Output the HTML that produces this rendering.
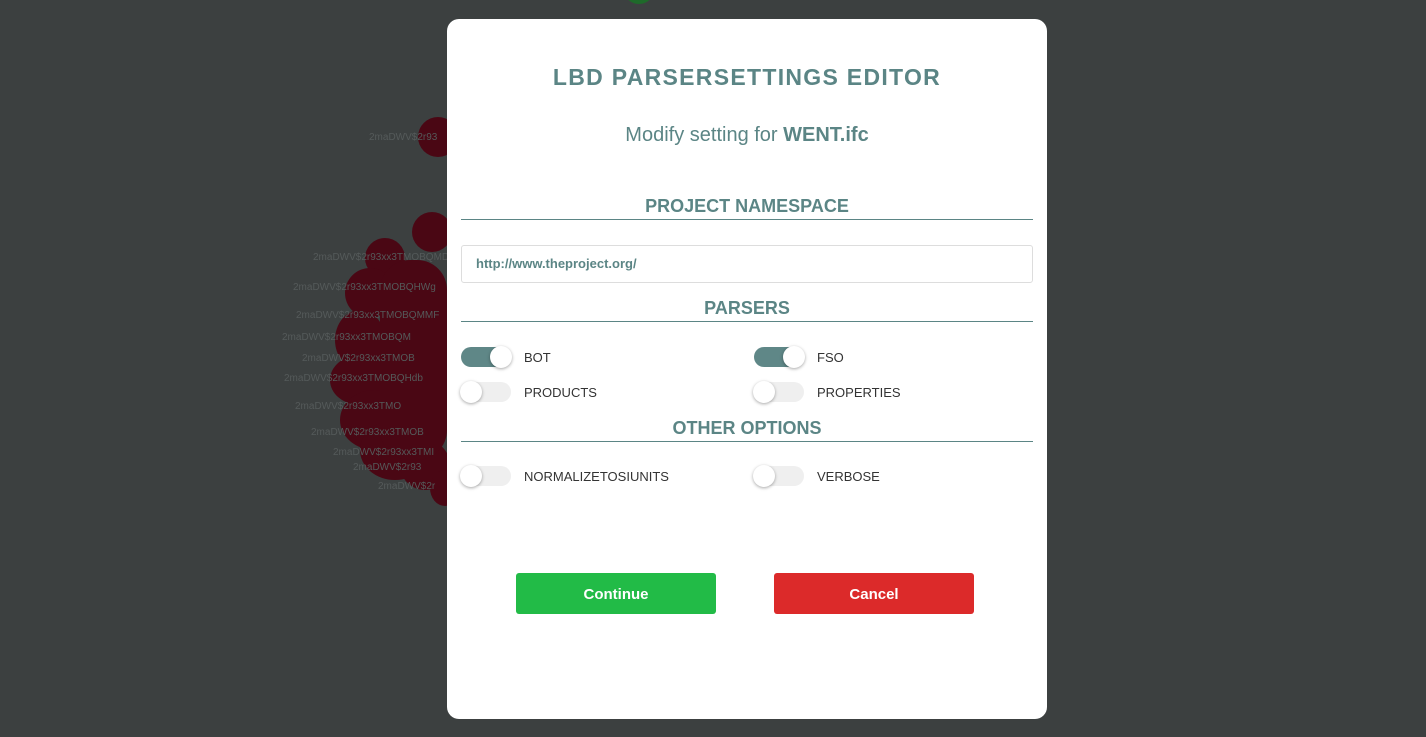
<!DOCTYPE html>
<html><head><style>
body{margin:0;width:1426px;height:737px;background:#3c4040;position:relative;overflow:hidden;font-family:"Liberation Sans",sans-serif}
.c{position:absolute;background:#4a0714;border-radius:50%}
.l{position:absolute;color:#555a5a;font-size:10px;white-space:nowrap}
.m{position:absolute;left:447px;top:19px;width:600px;height:700px;background:#fff;border-radius:12px}
.t{position:absolute;left:0;width:600px;text-align:center;color:#5b8585}
.h{position:absolute;left:14px;width:572px;border-bottom:1px solid #5b8585;text-align:center;color:#5b8585;font-weight:bold;font-size:18px;padding-bottom:2px}
.sw{position:absolute;width:50px;height:20px;border-radius:10px;background:#efefef}
.sw.on{background:#5f8787}
.sw i{position:absolute;top:-1px;left:-1px;width:22px;height:22px;border-radius:50%;background:#fff;box-shadow:0 1px 3px rgba(0,0,0,.35)}
.sw.on i{left:29px}
.lb{position:absolute;font-size:13px;color:#333}
.b{position:absolute;top:554px;width:200px;height:41px;border-radius:3px;color:#fff;font-weight:bold;font-size:15px;text-align:center;line-height:44px}
</style></head><body>
<div class="c" style="left:625px;top:-20px;width:28px;height:24px;background:#1e6a2a"></div>
<div class="c" style="left:418px;top:117px;width:40px;height:40px"></div>
<div class="c" style="left:412px;top:212px;width:40px;height:40px"></div>
<div class="c" style="left:365px;top:238px;width:40px;height:40px"></div>
<div class="c" style="left:345px;top:268px;width:50px;height:50px"></div>
<div class="c" style="left:335px;top:310px;width:50px;height:60px"></div>
<div class="c" style="left:330px;top:355px;width:60px;height:50px"></div>
<div class="c" style="left:340px;top:390px;width:70px;height:60px"></div>
<div class="c" style="left:360px;top:420px;width:70px;height:60px"></div>
<div class="c" style="left:400px;top:440px;width:50px;height:50px"></div>
<div class="c" style="left:430px;top:470px;width:30px;height:36px"></div>
<div class="c" style="left:380px;top:260px;width:67px;height:200px;border-radius:30px"></div>
<div class="l" style="left:369px;top:132px">2maDWV$2r93</div>
<div class="l" style="left:313px;top:252px">2maDWV$2r93xx3TMOBQMD</div>
<div class="l" style="left:293px;top:282px">2maDWV$2r93xx3TMOBQHWg</div>
<div class="l" style="left:296px;top:310px">2maDWV$2r93xx3TMOBQMMF</div>
<div class="l" style="left:282px;top:332px">2maDWV$2r93xx3TMOBQM</div>
<div class="l" style="left:302px;top:353px">2maDWV$2r93xx3TMOB</div>
<div class="l" style="left:284px;top:373px">2maDWV$2r93xx3TMOBQHdb</div>
<div class="l" style="left:295px;top:401px">2maDWV$2r93xx3TMO</div>
<div class="l" style="left:311px;top:427px">2maDWV$2r93xx3TMOB</div>
<div class="l" style="left:333px;top:447px">2maDWV$2r93xx3TMI</div>
<div class="l" style="left:353px;top:462px">2maDWV$2r93</div>
<div class="l" style="left:378px;top:481px">2maDWV$2r</div>
<div class="m">
<div class="t" style="top:45px;font-size:23px;font-weight:bold;letter-spacing:1.3px">LBD PARSERSETTINGS EDITOR</div>
<div class="t" style="top:105px;font-size:20px">Modify setting for <b>WENT.ifc</b></div>
<div class="h" style="top:177px">PROJECT NAMESPACE</div>
<div style="position:absolute;left:14px;top:226px;width:570px;height:36px;border:1px solid #ddd;border-radius:3px;font-size:13px;font-weight:bold;color:#5b8585;line-height:36px;text-indent:14px">http://www.theproject.org/</div>
<div class="h" style="top:279px">PARSERS</div>
<div class="sw on" style="left:14px;top:328px"><i></i></div><div class="lb" style="left:77px;top:331px">BOT</div>
<div class="sw on" style="left:307px;top:328px"><i></i></div><div class="lb" style="left:370px;top:331px">FSO</div>
<div class="sw" style="left:14px;top:363px"><i></i></div><div class="lb" style="left:77px;top:366px">PRODUCTS</div>
<div class="sw" style="left:307px;top:363px"><i></i></div><div class="lb" style="left:370px;top:366px">PROPERTIES</div>
<div class="h" style="top:399px">OTHER OPTIONS</div>
<div class="sw" style="left:14px;top:447px"><i></i></div><div class="lb" style="left:77px;top:450px">NORMALIZETOSIUNITS</div>
<div class="sw" style="left:307px;top:447px"><i></i></div><div class="lb" style="left:370px;top:450px">VERBOSE</div>
<div class="b" style="left:69px;background:#22bb47">Continue</div>
<div class="b" style="left:327px;background:#dc2a2a">Cancel</div>
</div>
</body></html>
